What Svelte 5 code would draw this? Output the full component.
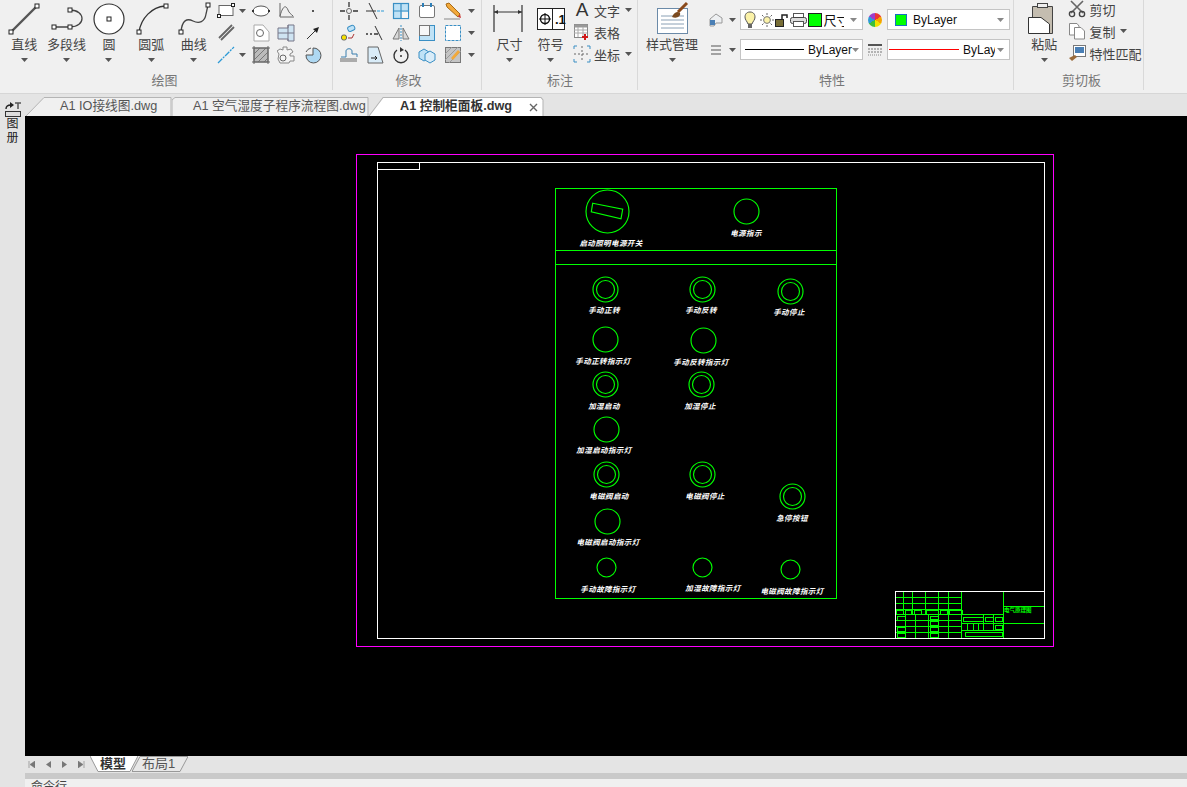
<script lang="ts">
	// drawing content, all in screen coordinates (the svg viewBox starts at the canvas corner)
	const doubles = [
		[605.5, 289.5], [702.5, 289.5], [790.5, 291.5], [605.5, 384.5], [701.5, 384.5],
		[606.5, 474.5], [702.5, 474.5], [792.5, 496.5]
	];
	const singles = [
		[746.5, 211.5, 12.5], [605.5, 339.5, 12.5], [703.5, 340.5, 12.5], [606.5, 429.5, 12.5],
		[607.5, 521.5, 12.5], [606.5, 567.5, 9.5], [702.5, 567.5, 9.5], [790.5, 569.5, 9.5]
	];
	const labels = [
		['启动照明电源开关', 611, 246],
		['电源指示', 746, 236],
		['手动正转', 604, 313],
		['手动反转', 701, 313],
		['手动停止', 789, 315],
		['手动正转指示灯', 603, 364],
		['手动反转指示灯', 701, 365],
		['加湿启动', 604, 409],
		['加湿停止', 700, 409],
		['加湿启动指示灯', 604, 453],
		['电磁阀启动', 609, 499],
		['电磁阀停止', 705, 499],
		['急停按钮', 792, 521],
		['电磁阀启动指示灯', 608, 545],
		['手动故障指示灯', 608, 592],
		['加湿故障指示灯', 713, 591],
		['电磁阀故障指示灯', 792, 594]
	];
	// title block
	const tbRows = [597.5, 603.5, 609.5, 614.5, 620.5, 626.5, 632.5];
	const tbColsTop = [903.5, 912.5, 925.5, 938.5, 948.5];
	const tbColsLow = [905.5, 915.5, 928.5, 938.5, 948.5];
	const tbBoxes = [
		[896.5, 610.5, 7, 4], [905.5, 610.5, 6, 4], [914.5, 610.5, 7, 4], [926.5, 610.5, 12, 4],
		[940.5, 610.5, 7, 4], [949.5, 610.5, 13, 4],
		[897.5, 616.5, 8, 4], [897.5, 627.5, 8, 4], [897.5, 633.5, 8, 4],
		[930.5, 616.5, 8, 3], [930.5, 621.5, 8, 4], [930.5, 627.5, 8, 4], [930.5, 633.5, 8, 4],
		[963.5, 617.5, 20, 4], [985.5, 617.5, 8, 4], [995.5, 617.5, 7, 4],
		[995.5, 625.5, 7, 4], [965.5, 632.5, 37, 4]
	];
</script>

{#snippet caret()}
	<svg class="caret" width="7" height="4" viewBox="0 0 7 4"><path d="M0 0h7L3.5 4z" fill="#555" /></svg>
{/snippet}

{#snippet handle(x: number, y: number)}
	<rect x={x - 2} y={y - 2} width="4" height="4" fill="#fff" stroke="#222" stroke-width="1" />
{/snippet}

<div class="app">
	<header class="ribbon">
		<section class="panel draw">
			<div class="body">
				<div class="big">
					<svg width="42" height="37" viewBox="0 0 42 37">
						<path d="M8 32 35 5" stroke="#555" stroke-width="2.4" fill="none" />
						{@render handle(8, 32)}{@render handle(34, 6)}
					</svg>
					<span>直线</span>{@render caret()}
				</div>
				<div class="big">
					<svg width="42" height="37" viewBox="0 0 42 37">
						<path d="M8 27H24M24 10C40 10 40 27 24 27" stroke="#444" stroke-width="1.3" fill="none" />
						{@render handle(8, 27)}{@render handle(24, 27)}{@render handle(24, 10)}
					</svg>
					<span>多段线</span>{@render caret()}
				</div>
				<div class="big">
					<svg width="42" height="37" viewBox="0 0 42 37">
						<circle cx="21" cy="19" r="15" fill="#fff" stroke="#333" stroke-width="1.2" />
						{@render handle(21, 19)}
					</svg>
					<span>圆</span>{@render caret()}
				</div>
				<div class="big">
					<svg width="42" height="37" viewBox="0 0 42 37">
						<path d="M9 32C11 18 22 7 35 6" stroke="#333" stroke-width="1.3" fill="none" />
						{@render handle(9, 32)}{@render handle(36, 6)}
					</svg>
					<span>圆弧</span>{@render caret()}
				</div>
				<div class="big">
					<svg width="42" height="37" viewBox="0 0 42 37">
						<path d="M8 32C9 20 14 18 20 21 26 24 32 22 33 14L35 5" stroke="#444" stroke-width="1.3" fill="none" />
						{@render handle(8, 32)}{@render handle(35, 5)}
					</svg>
					<span>曲线</span>{@render caret()}
				</div>
				<div class="tools draw-tools">
					<svg class="ic" viewBox="0 0 18 18"><rect x="2" y="3.5" width="14" height="10" fill="#fff" stroke="#666" /><rect x="14.5" y="1.5" width="3" height="3" fill="#fff" stroke="#222" /><rect x="0.5" y="12.5" width="3" height="3" fill="#fff" stroke="#222" /></svg>
					{@render caret()}
					<svg class="ic" viewBox="0 0 18 18"><ellipse cx="9" cy="9" rx="8" ry="5" fill="#fff" stroke="#555" /><rect x="0" y="8" width="2" height="2" fill="#333" /><rect x="16" y="8" width="2" height="2" fill="#333" /></svg>
					<svg class="ic" viewBox="0 0 18 18"><path d="M3 1V15H17M3 14C6 3 9 3 11 8 12 11 14 12 16 14" stroke="#666" fill="none" /></svg>
					<svg class="ic" viewBox="0 0 18 18"><rect x="8" y="8" width="2" height="2" fill="#555" /></svg>

					<svg class="ic" viewBox="0 0 18 18"><path d="M2 14 15 1M4 16 17 3" stroke="#666" stroke-width="1.8" fill="none" /></svg>
					<span></span>
					<svg class="ic" viewBox="0 0 18 18"><path d="M2 1H11L17 8V17H2Z" fill="#fff" stroke="#aaa" /><circle cx="8" cy="9" r="3.5" fill="none" stroke="#666" /></svg>
					<svg class="ic" viewBox="0 0 18 18"><path d="M1 4H11V1H17V17H11V15H1Z" fill="#cfe4f2" stroke="#778" /><path d="M1 9H17M11 1V17" stroke="#778" fill="none" /></svg>
					<svg class="ic" viewBox="0 0 18 18"><path d="M3 15 13 5" stroke="#333" fill="none" /><path d="M15 3 9 5 13 9Z" fill="#222" /></svg>

					<svg class="ic" viewBox="0 0 18 18"><path d="M1 17 17 1" stroke="#2d9ad6" stroke-width="1.3" stroke-dasharray="6 1 2 1" fill="none" /></svg>
					{@render caret()}
					<svg class="ic" viewBox="0 0 18 18"><rect x="2" y="2" width="14" height="14" fill="#bbb" stroke="#666" /><path d="M2 8 8 2M2 14 14 2M6 16 16 6M12 16 16 12" stroke="#777" fill="none" /><path d="M0 2H18M0 16H18M2 0V18M16 0V18" stroke="#666" fill="none" /></svg>
					<svg class="ic" viewBox="0 0 18 18"><path d="M6 1H10V4L14 3 16 6 13 8V10H17V15H13L12 17H3L1 13 2 8 0 5 3 3 6 4Z" fill="#f4f4f4" stroke="#888" /><circle cx="6" cy="12" r="3" fill="none" stroke="#666" /></svg>
					<svg class="ic" viewBox="0 0 18 18"><path d="M9 9V2A7.5 7.5 0 1 1 2 9Z" fill="#aed8f2" stroke="#555" /><path d="M2 6A7 7 0 0 1 7 2" fill="none" stroke="#555" /></svg>
				</div>
			</div>
			<footer>绘图</footer>
		</section>

		<section class="panel modify">
			<div class="body">
				<div class="tools modify-tools">
					<svg class="ic" viewBox="0 0 18 18"><circle cx="9" cy="9" r="2.5" fill="none" stroke="#666" /><path d="M9 0V5M9 13V18M0 9H5M13 9H18" stroke="#333" stroke-width="1.3" /></svg>
					<svg class="ic" viewBox="0 0 18 18"><path d="M0 9H10" stroke="#333" /><path d="M11 9H18" stroke="#2d9ad6" stroke-dasharray="3 1" /><path d="M3 1 11 17" stroke="#333" /></svg>
					<svg class="ic" viewBox="0 0 18 18"><rect x="1.5" y="1.5" width="15" height="15" fill="#bfe2f6" stroke="#3a8fc4" stroke-width="1.2" /><path d="M9 1V17M1 9H17" stroke="#3a8fc4" stroke-width="1.2" /><rect x="10" y="10" width="6" height="6" fill="#f5f5f5" /></svg>
					<svg class="ic" viewBox="0 0 18 18"><rect x="1.5" y="3.5" width="15" height="12" rx="1.5" fill="#fff" stroke="#777" /><rect x="4" y="1" width="2" height="4" fill="#2d7fb8" /><rect x="12" y="1" width="2" height="4" fill="#2d7fb8" /></svg>
					<svg class="ic" viewBox="0 0 18 18"><path d="M2 2 5 1 16 12 14 15 3 5Z" fill="#f2a93b" stroke="#a86a15" /><path d="M14 15 16 12 17 16Z" fill="#c33" /><path d="M0 17H16" stroke="#888" /></svg>
					{@render caret()}

					<svg class="ic" viewBox="0 0 18 18"><rect x="1.5" y="11" width="5" height="5" rx="2" fill="#f4e000" stroke="#666" /><rect x="8" y="2" width="7" height="5" rx="2" transform="rotate(-25 11 5)" fill="#bfe2f6" stroke="#3a8fc4" /><path d="M8 14H12L14 10" stroke="#a33" fill="none" /></svg>
					<svg class="ic" viewBox="0 0 18 18"><path d="M0 10H2M4 10H6M8 10H12" stroke="#333" stroke-width="1.3" /><path d="M9 2 16 16" stroke="#333" /></svg>
					<svg class="ic" viewBox="0 0 18 18"><path d="M7 4V15H1ZM11 4V15H17Z" fill="#d8d8d8" stroke="#777" /><path d="M9 1V17" stroke="#3a8fc4" stroke-dasharray="2 1" /></svg>
					<svg class="ic" viewBox="0 0 18 18"><rect x="1.5" y="1.5" width="15" height="15" fill="#bfe2f6" stroke="#3a8fc4" /><rect x="1.5" y="1.5" width="10" height="10" fill="#f7f7f7" stroke="#777" /></svg>
					<svg class="ic" viewBox="0 0 18 18"><rect x="1.5" y="1.5" width="15" height="15" fill="#fff" stroke="#3a8fc4" stroke-dasharray="3 1" /></svg>
					{@render caret()}

					<svg class="ic" viewBox="0 0 18 18"><path d="M1 11H6V5C6 2 12 2 12 5V8H17V11" fill="none" stroke="#3a7fae" /><path d="M0 13H17M0 15H17" stroke="#666" /></svg>
					<svg class="ic" viewBox="0 0 18 18"><path d="M2 1H12L17 17H2Z" fill="#d9ecf8" stroke="#666" /><path d="M5 12H11M9 10 11 12 9 14" stroke="#222" fill="none" /></svg>
					<svg class="ic" viewBox="0 0 18 18"><path d="M5 4A7 7 0 1 0 13 4" fill="none" stroke="#333" stroke-width="1.4" /><path d="M8 1 12 4 8 6Z" fill="#333" /><circle cx="9" cy="10" r="1" fill="#333" /></svg>
					<svg class="ic" viewBox="0 0 18 18"><path d="M1 6 6 3 11 6V12L6 15 1 12Z" fill="#bfe2f6" stroke="#3a8fc4" /><path d="M7 8 12 5 17 8V14L12 17 7 14Z" fill="#d9ecf8" stroke="#3a8fc4" /></svg>
					<svg class="ic" viewBox="0 0 18 18"><rect x="1.5" y="1.5" width="15" height="15" fill="#c4c4c4" stroke="#777" /><path d="M1 8 8 1M1 14 14 1M5 17 17 5" stroke="#999" /><path d="M7 12 14 4 16 6 9 14Z" fill="#f2a93b" /></svg>
					{@render caret()}
				</div>
			</div>
			<footer>修改</footer>
		</section>

		<section class="panel notes">
			<div class="body">
				<div class="big wide">
					<svg width="41" height="37" viewBox="0 0 41 37">
						<path d="M5 5V32M33 5V32" stroke="#333" stroke-width="1.2" />
						<path d="M5 12H33" stroke="#333" />
						<path d="M5 12 9 10V14ZM33 12 29 10V14Z" fill="#333" />
					</svg>
					<span>尺寸</span>{@render caret()}
				</div>
				<div class="big wide">
					<svg width="41" height="37" viewBox="0 0 41 37">
						<rect x="7.5" y="8.5" width="27" height="21" fill="#fff" stroke="#222" />
						<path d="M22.5 8V30" stroke="#222" />
						<circle cx="15" cy="19" r="4.5" fill="none" stroke="#111" stroke-width="1.4" />
						<path d="M9 19H21M15 13V25" stroke="#111" />
						<text x="25" y="24" font-size="13" font-weight="700" fill="#111" font-family="Liberation Sans">.1</text>
					</svg>
					<span>符号</span>{@render caret()}
				</div>
				<div class="list">
					<div class="row">
						<span class="glyph-a">A</span><span>文字</span>{@render caret()}
					</div>
					<div class="row">
						<svg class="ic" viewBox="0 0 18 18"><rect x="1.5" y="1.5" width="13" height="13" fill="#fff" stroke="#888" /><rect x="1.5" y="1.5" width="13" height="3" fill="#999" /><path d="M1 7H14M1 10H14M5 4V14M10 4V14" stroke="#aaa" /><path d="M12 11V17M9 14H15" stroke="#d01818" stroke-width="2" /></svg>
						<span>表格</span>
					</div>
					<div class="row">
						<svg class="ic" viewBox="0 0 18 18"><path d="M9 1V17M1 9H17" stroke="#666" stroke-dasharray="2 2" /><path d="M1 1H4M14 1H17M1 17H4M14 17H17M1 1V4M17 1V4M1 14V17M17 14V17" stroke="#3a8fc4" /></svg>
						<span>坐标</span>{@render caret()}
					</div>
				</div>
			</div>
			<footer>标注</footer>
		</section>

		<section class="panel props">
			<div class="body">
				<div class="big style-tool">
					<svg width="42" height="37" viewBox="0 0 42 37">
						<rect x="6.5" y="8.5" width="30" height="25" fill="#fff" stroke="#6b8aa8" />
						<path d="M10 16H33M10 20H33M10 24H33M10 28H33" stroke="#8aa0b5" />
						<path d="M36 3 27 12" stroke="#8a4a1c" stroke-width="3" />
						<path d="M21 17C23 12 27 11 29 13 30 16 26 19 21 17Z" fill="#7a4a20" />
					</svg>
					<span>样式管理</span>{@render caret()}
				</div>
				<div class="prop-grid">
					<svg class="ic" viewBox="0 0 18 18"><path d="M3 8 9 3 15 7V12H9L7 15H3Z" fill="#eef0f2" stroke="#999" /><rect x="3" y="9" width="5" height="5" fill="#4a7fb5" /></svg>
					{@render caret()}
					<div class="select layer">
						<svg width="12" height="18" viewBox="0 0 12 18"><path d="M6 1C2 1 1 4 1 6 1 9 3 10 4 13H8C9 10 11 9 11 6 11 4 10 1 6 1Z" fill="#fbf2a8" stroke="#555" /><rect x="4" y="13" width="4" height="4" fill="#666" /></svg>
						<svg class="sun" width="14" height="14" viewBox="0 0 14 14"><circle cx="7" cy="7" r="3.4" fill="#fbf2a8" stroke="#777" /><path d="M7 0V2M7 12V14M0 7H2M12 7H14M2 2 3.5 3.5M10.5 10.5 12 12M12 2 10.5 3.5M3.5 10.5 2 12" stroke="#666" /></svg>
						<svg width="13" height="14" viewBox="0 0 13 14"><rect x="0" y="6" width="9" height="8" fill="#222" /><path d="M1 8H8M1 10H8M1 12H8" stroke="#cdb94a" /><path d="M7 6V2H12V5" stroke="#222" stroke-width="1.5" fill="none" /></svg>
						<svg width="17" height="14" viewBox="0 0 17 14"><rect x="3.5" y="0.5" width="10" height="4" fill="#fff" stroke="#555" /><rect x="0.5" y="4.5" width="16" height="6" rx="2" fill="#ddd" stroke="#444" /><rect x="3.5" y="8.5" width="10" height="5" fill="#fff" stroke="#555" /></svg>
						<i class="swatch big-swatch"></i>
						<span class="clip">尺寸</span>
						{@render caret()}
					</div>
					<i class="wheel"></i>
					<div class="select color">
						<i class="swatch"></i><span class="grow">ByLayer</span>{@render caret()}
					</div>

					<svg class="ic" viewBox="0 0 18 18"><path d="M4 5H14M4 9H14M4 13H14" stroke="#555" stroke-width="1.2" /></svg>
					{@render caret()}
					<div class="select line">
						<svg class="sample" width="59" height="1" viewBox="0 0 59 1"><rect width="59" height="1" fill="#000" /></svg>
						<span>ByLayer</span>{@render caret()}
					</div>
					<svg class="ic" viewBox="0 0 18 18"><path d="M2 4H16" stroke="#555" stroke-width="2" /><path d="M2 8H16M2 11H16" stroke="#777" stroke-dasharray="2 1" /><path d="M2 14H16" stroke="#888" stroke-dasharray="1 1" /></svg>
					<div class="select line">
						<svg class="sample red-sample" width="70" height="1" viewBox="0 0 70 1"><rect width="70" height="1" fill="#ff0000" /></svg>
						<span class="clip-by">ByLayer</span>{@render caret()}
					</div>
				</div>
			</div>
			<footer>特性</footer>
		</section>

		<section class="panel clipboard">
			<div class="body">
				<div class="big paste">
					<svg width="42" height="37" viewBox="0 0 42 37">
						<path d="M9.5 6.5H29.5V33.5H9.5Z" fill="#c4bdb0" stroke="#444" />
						<rect x="14.5" y="3.5" width="10" height="4" fill="#eee" stroke="#444" />
						<path d="M5.5 17.5H18L26.5 24V33.5H5.5Z" fill="#fff" stroke="#333" />
					</svg>
					<span>粘贴</span>{@render caret()}
				</div>
				<div class="list clip-list">
					<div class="row">
						<svg class="ic" viewBox="0 0 18 18"><path d="M3 1 15 13M15 1 3 13" stroke="#666" stroke-width="1.6" /><circle cx="4" cy="14" r="2.6" fill="none" stroke="#444" stroke-width="1.4" /><circle cx="14" cy="14" r="2.6" fill="none" stroke="#444" stroke-width="1.4" /></svg>
						<span>剪切</span>
					</div>
					<div class="row">
						<svg class="ic" viewBox="0 0 18 18"><path d="M1.5 1.5H9L11 4V13H1.5Z" fill="#fff" stroke="#888" /><path d="M6.5 5.5H13L16.5 9V17H6.5Z" fill="#fff" stroke="#888" /></svg>
						<span>复制</span>{@render caret()}
					</div>
					<div class="row">
						<svg class="ic" viewBox="0 0 18 18"><rect x="5.5" y="1.5" width="12" height="11" fill="#fff" stroke="#777" /><rect x="7" y="3" width="9" height="6" fill="#4a7fb5" /><path d="M1 14 7 11 9 13 4 17Z" fill="#9a6a3a" /></svg>
						<span>特性匹配</span>
					</div>
				</div>
			</div>
			<footer>剪切板</footer>
		</section>
	</header>

	<main class="workspace">
		<aside class="strip">
			<svg width="16" height="15" viewBox="0 0 16 15">
				<path d="M1 7C1 4 3 3 6 3" stroke="#222" stroke-width="1.4" fill="none" />
				<path d="M5 0 9 3 5 6Z" fill="#222" />
				<path d="M10 1H16M13 1V7" stroke="#555" stroke-width="1.5" />
				<rect x="0.5" y="9.5" width="15" height="5" fill="#ddd" stroke="#333" />
			</svg>
			<span>图</span>
			<span>册</span>
		</aside>

		<div class="center">
			<nav class="doc-tabs">
				<div class="doc-tab first">
					<svg class="shape" viewBox="0 0 146 19" preserveAspectRatio="none"><path d="M0 19 18 0.5H145V19" fill="#f0f0f0" stroke="#b4b4b4" /></svg>
					<span>A1 IO接线图.dwg</span>
				</div>
				<div class="doc-tab second">
					<svg class="shape" viewBox="0 0 198 19" preserveAspectRatio="none"><path d="M0 19V3L3 0.5H197V19" fill="#f0f0f0" stroke="#b4b4b4" /></svg>
					<span>A1 空气湿度子程序流程图.dwg</span>
				</div>
				<div class="doc-tab active">
					<svg class="shape" viewBox="0 0 174 19" preserveAspectRatio="none"><path d="M0 19 14 0.5H171L173 3V19" fill="#fff" stroke="#b4b4b4" /></svg>
					<span>A1 控制柜面板.dwg</span>
					<svg class="close" width="9" height="9" viewBox="0 0 9 9"><path d="M1 1 8 8M8 1 1 8" stroke="#666" stroke-width="1.4" /></svg>
				</div>
			</nav>

			<svg class="canvas" viewBox="25 116 1162 640" width="1162" height="640">
				<g fill="none" shape-rendering="crispEdges">
					<rect x="356.5" y="154.5" width="697" height="492" stroke="#ff00ff" />
					<rect x="377.5" y="162.5" width="667" height="476" stroke="#fff" />
					<path d="M377.5 169.5H419.5V162.5" stroke="#fff" />
					<g stroke="#00ff00">
						<rect x="555.5" y="188.5" width="281" height="410" />
						<path d="M555 250.5H837M555 264.5H837" />
					</g>
				</g>
				<g fill="none" stroke="#00ff00" stroke-width="1.15">
					<circle cx="607.5" cy="211.5" r="21.5" />
					<path d="M592.7 203.3 622.7 209.3 621 218.7 591.3 211.7Z" />
					{#each doubles as [cx, cy]}
						<circle {cx} {cy} r="12.5" />
						<circle {cx} {cy} r="9" />
					{/each}
					{#each singles as [cx, cy, r]}
						<circle {cx} {cy} {r} />
					{/each}
				</g>
				<g class="cad-text">
					{#each labels as [label, x, y]}
						<text {x} {y}>{label}</text>
					{/each}
				</g>

				<g fill="none" stroke="#00ff00" shape-rendering="crispEdges">
					{#each tbRows as y}
						<path d="M895 {y}H961.5" />
					{/each}
					{#each tbColsTop as x}
						<path d="M{x} 591V614" />
					{/each}
					{#each tbColsLow as x}
						<path d="M{x} 614V638" />
					{/each}
					<path d="M961.5 591V638M1003.5 591V638M1003 606.5H1044M1003 623.5H1044" />
					<path d="M961 614.5H1003M961 623.5H1003M961 630.5H1003M983.5 614.5V630.5M993.5 614.5V630.5" />
					<path d="M967.5 623V630M973.5 623V630M978.5 623V630" />
					{#each tbBoxes as [x, y, width, height]}
						<rect {x} {y} {width} {height} />
					{/each}
				</g>
				<g fill="none" stroke="#fff" shape-rendering="crispEdges">
					<path d="M895.5 638V591.5H1044" />
				</g>
				<text class="tb-text" x="1004" y="612">电气原理图</text>
			</svg>

			<div class="sheets">
				<div class="nav-arrows">
					<svg width="7" height="7" viewBox="0 0 7 7"><path d="M1 0V7M7 0V7L2 3.5Z" fill="#777" stroke="#777" stroke-width=".6" /></svg>
					<svg width="7" height="7" viewBox="0 0 7 7"><path d="M6 0V7L1 3.5Z" fill="#777" /></svg>
					<svg width="7" height="7" viewBox="0 0 7 7"><path d="M1 0V7L6 3.5Z" fill="#777" /></svg>
					<svg width="7" height="7" viewBox="0 0 7 7"><path d="M6 0V7M0 0V7L5 3.5Z" fill="#777" stroke="#777" stroke-width=".6" /></svg>
				</div>
				<div class="sheet active">
					<svg class="shape" viewBox="0 0 48 16" preserveAspectRatio="none"><path d="M0 0 8 15.5H40L48 0Z" fill="#fff" /><path d="M0 0 8 15.5H40L48 0" fill="none" stroke="#999" /></svg>
					<span>模型</span>
				</div>
				<div class="sheet">
					<svg class="shape" viewBox="0 0 56 16" preserveAspectRatio="none"><path d="M0 15.5 8 0.5H56L48 15.5Z" fill="#e8e8e8" stroke="#999" /></svg>
					<span>布局1</span>
				</div>
			</div>
			<div class="h-scroll"></div>
			<div class="cmd">命令行</div>
		</div>
	</main>
</div>

<style>
	:global(body) {
		margin: 0;
		overflow: hidden;
		background: #e4e4e4;
	}

	.app {
		width: 1187px;
		height: 787px;
		overflow: hidden;
		display: flex;
		flex-direction: column;
		font-family: 'Liberation Sans', 'Noto Sans CJK SC', sans-serif;
		font-size: 13px;
		color: #444;
	}

	.ribbon {
		height: 93px;
		flex: none;
		display: flex;
		background: #f0f0f0;
		border-bottom: 1px solid #d6d6d6;
	}

	.panel {
		height: 90px;
		display: flex;
		flex-direction: column;
		border-right: 1px solid #d9d9d9;
		box-sizing: border-box;
	}

	.panel footer {
		height: 18px;
		line-height: 18px;
		text-align: center;
		color: #777;
	}

	.draw footer { margin-left: -6px; }
	.notes footer { margin-left: -6px; }
	.clipboard footer { margin-left: -3px; }

	.body {
		height: 72px;
		display: flex;
	}

	.draw { width: 333px; padding-left: 3px; }
	.modify { width: 149px; padding-left: 3px; }
	.notes { width: 156px; padding-left: 7px; }
	.props { width: 376px; padding-left: 13px; }
	.clipboard { width: 130px; padding-left: 9px; }

	.panel, .panel * { box-sizing: border-box; }

	.big {
		width: 42.4px;
		display: flex;
		flex-direction: column;
		align-items: center;
		line-height: 17px;
		white-space: nowrap;
	}

	.big svg:first-child { flex: none; }
	.big span { height: 18px; margin-top: -1px; }
	.big .caret { margin-top: 4px; }
	.wide { width: 41px; }
	.style-tool { width: 42px; margin-right: 15px; }

	.tools {
		display: grid;
		grid-auto-rows: 22px;
		align-items: center;
		justify-items: center;
	}

	.draw-tools {
		grid-template-columns: 22px 12px 24px 26px 28px;
	}

	.modify-tools {
		grid-template-columns: repeat(5, 26px) 10px;
	}

	.ic {
		width: 18px;
		height: 18px;
		flex: none;
	}

	.list {
		display: grid;
		grid-auto-rows: 22px;
		margin-left: 2px;
		margin-top: -1px;
	}

	.row {
		display: flex;
		align-items: center;
		gap: 3px;
		white-space: nowrap;
	}

	.row .caret { margin-left: 2px; }

	.glyph-a {
		width: 18px;
		text-align: center;
		font-size: 19px;
		line-height: 18px;
		color: #333;
	}

	.prop-grid {
		display: grid;
		grid-template-columns: 18px 15px 123px 24px 123px;
		grid-auto-rows: 21px;
		row-gap: 9px;
		margin-top: 9px;
		align-items: center;
		justify-items: center;
		margin-left: -1px;
		width: 303px;
	}

	.select {
		width: 100%;
		height: 21px;
		display: flex;
		align-items: center;
		background: #fff;
		border: 1px solid #c4c4c4;
		padding: 0 5px 0 4px;
		color: #111;
		font-size: 12px;
		white-space: nowrap;
		overflow: hidden;
	}

	.select .caret { margin-left: auto; flex: none; }
	.select .caret path { fill: #888; }

	.layer {
		gap: 1.5px;
		padding-left: 3px;
	}

	.layer .sun { margin-left: 2px; }

	.layer .clip {
		width: 20px;
		overflow: hidden;
		font-size: 13px;
	}

	.swatch {
		width: 12px;
		height: 12px;
		flex: none;
		background: #00ff00;
		border: 1px solid #1a6fc4;
		margin: 0 6px 0 3px;
	}

	.big-swatch {
		width: 14px;
		height: 14px;
		margin: 0;
		border-color: #222;
	}

	.grow { flex: 1; }

	.wheel {
		width: 14px;
		height: 14px;
		border-radius: 50%;
		background: conic-gradient(#e33 0 60deg, #f5a300 60deg 120deg, #f2e200 120deg 180deg, #3bbf3b 180deg 240deg, #2d9ad6 240deg 300deg, #a03cc8 300deg);
	}

	.sample {
		flex: none;
		margin-right: 4px;
	}

	.red-sample { margin-left: -3px; }
	.clip-by { width: 32px; overflow: hidden; }

	.clip-list {
		margin-left: 3px;
		margin-top: -2px;
	}

	.workspace {
		flex: 1;
		min-height: 0;
		display: flex;
	}

	.strip {
		width: 25px;
		flex: none;
		padding-top: 8px;
		display: flex;
		flex-direction: column;
		align-items: center;
		font-size: 12px;
		line-height: 13px;
		color: #222;
		background: #e4e4e4;
	}

	.strip span { margin-top: 1px; }

	.center {
		flex: 1;
		min-width: 0;
		display: flex;
		flex-direction: column;
	}

	.doc-tabs {
		height: 22px;
		flex: none;
		padding: 3px 0 0 1px;
		box-sizing: border-box;
		display: flex;
		background: #e4e4e4;
		font-size: 12.7px;
		color: #555;
	}

	.doc-tab {
		position: relative;
		height: 19px;
		line-height: 19px;
		box-sizing: border-box;
		white-space: nowrap;
	}

	.doc-tab span { position: relative; }

	.shape {
		position: absolute;
		inset: 0;
		width: 100%;
		height: 100%;
	}

	.doc-tab.first { width: 146px; padding-left: 34px; }
	.doc-tab.second { width: 197px; padding-left: 21px; }
	.doc-tab.active { width: 175px; padding-left: 31px; font-weight: 700; color: #333; }

	.close {
		position: absolute;
		right: 6px;
		top: 6px;
	}

	.canvas {
		display: block;
		flex: none;
		background: #000;
	}

	.cad-text text {
		fill: #fff;
		font-size: 7.5px;
		font-weight: 700;
		font-style: italic;
		letter-spacing: 0.4px;
		text-anchor: middle;
		font-family: 'Noto Sans CJK SC', sans-serif;
	}

	.tb-text {
		fill: #00ff00;
		font-size: 5.5px;
		font-weight: 700;
		font-family: 'Noto Sans CJK SC', sans-serif;
	}

	.sheets {
		height: 17px;
		flex: none;
		display: flex;
		background: #e4e4e4;
		font-size: 13px;
		color: #555;
	}

	.nav-arrows {
		width: 65px;
		padding-left: 3px;
		display: flex;
		align-items: center;
		gap: 9.5px;
		box-sizing: border-box;
	}

	.sheet {
		position: relative;
		height: 16px;
		line-height: 15px;
		box-sizing: border-box;
		white-space: nowrap;
	}

	.sheet span { position: relative; }

	.sheet.active {
		width: 48px;
		padding-left: 10px;
		font-weight: 700;
		color: #333;
	}

	.sheet:not(.active) {
		width: 56px;
		margin-left: -6px;
		padding-left: 10px;
	}

	.h-scroll {
		height: 6px;
		flex: none;
		background: #c9c9c9;
	}

	.cmd {
		flex: 1;
		min-height: 0;
		padding: 1px 0 0 6px;
		font-size: 12px;
		line-height: 14px;
		color: #444;
		background: #f0f0f0;
	}
</style>
